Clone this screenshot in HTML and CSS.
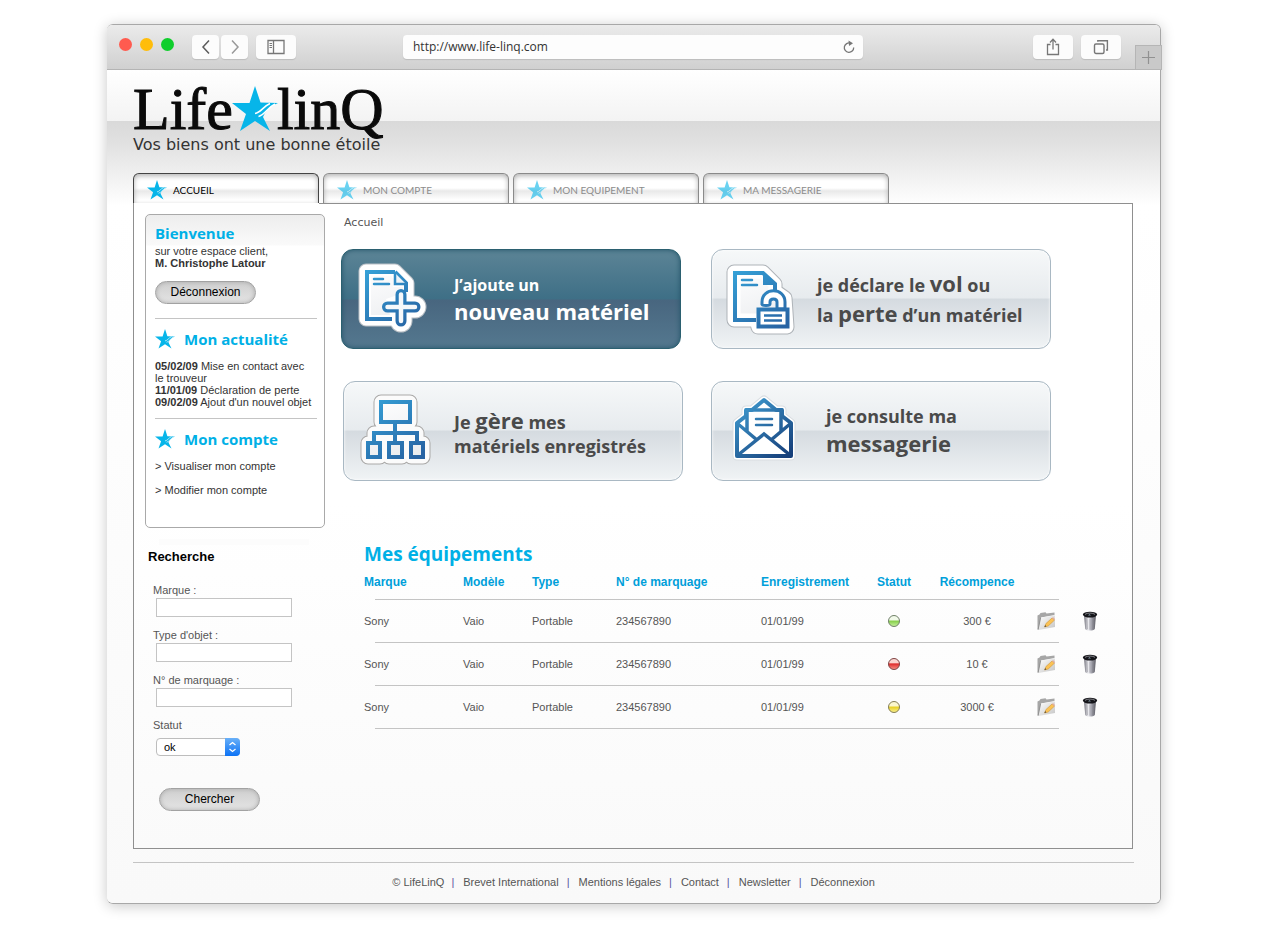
FILE: index.html
```html
<!DOCTYPE html>
<html lang="fr">
<head>
<meta charset="utf-8">
<title>LifeLinQ - Accueil</title>
<link rel="stylesheet" href="styles.css">
</head>
<body>
<svg class="sprite" aria-hidden="true">
  <defs>
    <linearGradient id="blue" gradientUnits="userSpaceOnUse" x1="10" y1="6" x2="55" y2="68">
      <stop offset="0" stop-color="#36a3d9"/><stop offset="1" stop-color="#2763a3"/>
    </linearGradient>
    <linearGradient id="navy" gradientUnits="userSpaceOnUse" x1="12" y1="8" x2="58" y2="64">
      <stop offset="0" stop-color="#3f9bd0"/><stop offset="1" stop-color="#163f7a"/>
    </linearGradient>
    <linearGradient id="paper" gradientUnits="userSpaceOnUse" x1="20" y1="5" x2="40" y2="70">
      <stop offset="0" stop-color="#ffffff"/><stop offset="1" stop-color="#e9ebee"/>
    </linearGradient>
    <linearGradient id="can" x1="0" x2="1" y1="0" y2="0">
      <stop offset="0" stop-color="#6c6c76"/><stop offset=".35" stop-color="#f0f0f4"/><stop offset=".65" stop-color="#9c9ca6"/><stop offset="1" stop-color="#5a5a62"/>
    </linearGradient>
    <linearGradient id="folderfill" x1="0" x2="1" y1="0" y2="1">
      <stop offset="0" stop-color="#ffffff"/><stop offset="1" stop-color="#c4c4c4"/>
    </linearGradient>
  </defs>
  <symbol id="star" viewBox="0 0 46 46">
    <path fill="#07b5e9" d="M23 0 28.500 16.500 46 17C41 19 36 23 33 27L31 31 38 45 23 35 8 45 14 28 0 17H17.500Z"/>
    <path fill="none" stroke="#fff" stroke-width="1.500" d="M23 27.500C29 26.500 31 20.500 38 17.500M26.500 30.500C33 29 35 22 43 18"/>
  </symbol>
  <symbol id="folder" viewBox="0 0 20 20">
    <path d="M1.500 18V4.500L3.500 3.500 4.500 2 9.500 1.200 10.500 2.500 18.500 1.500V4L5 6.500 3 18Z" fill="#a6a6a6"/>
    <path d="M2.500 19 5 6.500 19 4.500V16Z" fill="url(#folderfill)"/>
    <path d="M2 19 4.700 6.700" stroke="#8a8a8a" stroke-width=".8" fill="none"/>
    <path d="m8.500 16 1.500-3.500 6-5.500 2.300 2.300-6.100 5.700Z" fill="#fbc254" stroke="#cf9536" stroke-width=".6"/>
    <path d="m16 7 1-1 2.200 2.200-1 1.100Z" fill="#e3b0a0"/>
    <path d="m8.500 16 .700-1.800 1.200 1.100Z" fill="#333"/>
  </symbol>
  <symbol id="bin" viewBox="0 0 16 20">
    <path d="M2 4 3.200 18C5 20 11 20 12.800 18L14 4Z" fill="url(#can)"/>
    <path d="M5 7.500 5.500 18M8 8V18.500M11 7.500 10.500 18" stroke="#85858e" stroke-width=".4"/>
    <ellipse cx="8" cy="3.600" rx="7.200" ry="2.900" fill="#15151a"/>
    <path d="M3 3.400C5 1.600 11 1.600 13 3.400" stroke="#9a9aa0" fill="none" stroke-width=".8"/>
    <path d="M6 4.500 7.500 3 9 4.500" fill="#7e92a0"/>
  </symbol>
</svg>

<div class="browser">
  <header class="toolbar">
    <div class="lights"><span class="light red"></span><span class="light amber"></span><span class="light green"></span></div>
    <div class="nav">
      <button class="tool" type="button" aria-label="Précédent"><svg width="14" height="16" viewBox="0 0 14 16"><path d="M10 1.500 4 8l6 6.500" fill="none" stroke="#5b5b5b" stroke-width="1.500"/></svg></button>
      <button class="tool" type="button" aria-label="Suivant"><svg width="14" height="16" viewBox="0 0 14 16"><path d="M4 1.500 10 8l-6 6.500" fill="none" stroke="#999" stroke-width="1.500"/></svg></button>
    </div>
    <button class="tool wide" type="button" aria-label="Barre latérale"><svg width="18" height="16" viewBox="0 0 18 16"><path d="M1 1.500H17V14.500H1ZM6.500 1.500V14.500" fill="none" stroke="#777" stroke-width="1.300"/><path d="M2.500 4.500H5M2.500 6.500H5M2.500 8.500H5" stroke="#777"/></svg></button>
    <div class="address">
      <input type="text" value="http://www.life-linq.com" aria-label="Adresse">
      <button class="reload" type="button" aria-label="Recharger"><svg width="14" height="14" viewBox="0 0 14 14"><path d="M8.500 3.200A4.700 4.700 0 1 0 11.700 7.500" fill="none" stroke="#777" stroke-width="1.300"/><path d="M6.500.500 11 3.200 7 6Z" fill="#777"/></svg></button>
    </div>
    <button class="tool wide" type="button" aria-label="Partager"><svg width="14" height="18" viewBox="0 0 14 18"><path d="M4.500 6.500H1.500V16.500H12.500V6.500H9.500M7 11.500V1.500M4 4.500 7 1.300 10 4.500" fill="none" stroke="#777" stroke-width="1.300"/></svg></button>
    <button class="tool wide" type="button" aria-label="Onglets"><svg width="16" height="16" viewBox="0 0 16 16"><rect x="1.500" y="5" width="9.500" height="9.500" rx="1.500" fill="none" stroke="#777" stroke-width="1.400"/><path d="M4.800 2.800V1.700H14.400V11H13" fill="none" stroke="#777" stroke-width="1.400"/></svg></button>
    <button class="newtab" type="button" aria-label="Nouvel onglet"><svg width="13" height="13" viewBox="0 0 13 13"><path d="M6.500 0V13M0 6.500H13" stroke="#919191" stroke-width="1.200"/></svg></button>
  </header>

  <div class="page">
    <div class="brand">
      <div class="logo"><span>Life</span><svg width="46" height="46"><use href="#star"/></svg><span>linQ</span></div>
      <p class="tagline">Vos biens ont une bonne étoile</p>
    </div>

    <nav class="tabs">
      <a class="tab active" href="#"><svg width="20" height="20"><use href="#star"/></svg>ACCUEIL</a>
      <a class="tab" href="#"><svg width="20" height="20"><use href="#star"/></svg>MON COMPTE</a>
      <a class="tab" href="#"><svg width="20" height="20"><use href="#star"/></svg>MON EQUIPEMENT</a>
      <a class="tab" href="#"><svg width="20" height="20"><use href="#star"/></svg>MA MESSAGERIE</a>
    </nav>

    <div class="frame">
      <aside class="side">
        <div class="panel">
          <h2>Bienvenue</h2>
          <p>sur votre espace client,<br><b>M. Christophe Latour</b></p>
          <button class="pill" type="button">Déconnexion</button>
          <section>
            <h2><svg width="20" height="20"><use href="#star"/></svg>Mon actualité</h2>
            <p><b>05/02/09</b> Mise en contact avec le trouveur<br><b>11/01/09</b> Déclaration de perte<br><b>09/02/09</b> Ajout d'un nouvel objet</p>
          </section>
          <section>
            <h2><svg width="20" height="20"><use href="#star"/></svg>Mon compte</h2>
            <div class="links">
              <a href="#">&gt; Visualiser mon compte</a>
              <a href="#">&gt; Modifier mon compte</a>
            </div>
          </section>
        </div>
        <form class="search">
          <h3>Recherche</h3>
          <div class="field"><label for="marque">Marque :</label><input id="marque" type="text"></div>
          <div class="field"><label for="objet">Type d'objet :</label><input id="objet" type="text"></div>
          <div class="field"><label for="numero">N° de marquage :</label><input id="numero" type="text"></div>
          <div class="field status">
            <label for="statut">Statut</label>
            <div class="picker">
              <select id="statut"><option>ok</option></select>
              <svg width="15" height="18" viewBox="0 0 15 18"><path d="M4.500 7 7.500 4.500 10.500 7M4.500 11 7.500 13.500 10.500 11" fill="none" stroke="#fff" stroke-width="1.300"/></svg>
            </div>
          </div>
          <button class="pill" type="button">Chercher</button>
        </form>
      </aside>

      <main class="main">
        <p class="crumb">Accueil</p>
        <div class="cards">
          <a class="card dark" href="#">
            <svg width="78" height="78" viewBox="0 -1 78 78">
              <g stroke-linejoin="round" stroke-linecap="round" fill="none">
                <path d="M10 10H39L51 22V46L45 58H10Z" stroke="#b9bfc5" stroke-width="15"/>
                <path d="M45 32V60M31 46H59" stroke="#b9bfc5" stroke-width="23"/>
                <path d="M10 10H39L51 22V46L45 58H10Z" stroke="#fff" stroke-width="13" fill="url(#paper)"/>
                <path d="M45 32V60M31 46H59" stroke="#fff" stroke-width="21"/>
              </g>
              <path d="M15 15H36V26H47V32L30 38 34 54H15Z" fill="url(#paper)"/>
              <path d="M39 11 50 22V31M36 58H11V11H39" fill="none" stroke="url(#blue)" stroke-width="4"/>
              <path d="M39 12V23H50" fill="#eef4f8" stroke="url(#blue)" stroke-width="2.500"/>
              <path d="M18 18H27M18 23H33" stroke="url(#blue)" stroke-width="2.500" stroke-linecap="round"/>
              <path d="M45 33.500V60M31.500 46H59" fill="none" stroke="url(#blue)" stroke-width="11" stroke-linecap="round"/>
              <path d="M45 33.500V60M31.500 46H59" fill="none" stroke="#f6f8fa" stroke-width="4.500" stroke-linecap="round"/>
            </svg>
            <span class="text"><span>J’ajoute un</span><br><strong>nouveau matériel</strong></span>
          </a>
          <a class="card loss" href="#">
            <svg width="78" height="78" viewBox="0 -2 78 78">
              <path d="M10 10H39L51 22V29L61 36 63 65H34L32 58H10Z" fill="none" stroke="#aeb3b8" stroke-width="15" stroke-linejoin="round"/>
              <path d="M10 10H39L51 22V29L61 36 63 65H34L32 58H10Z" fill="url(#paper)" stroke="#fff" stroke-width="13" stroke-linejoin="round"/>
              <path d="M51 28V22L39 11H11V58H32" fill="none" stroke="url(#blue)" stroke-width="4"/>
              <path d="M39 11V23H51Z" fill="url(#blue)"/>
              <path d="M18 18H28M18 23H33" stroke="url(#blue)" stroke-width="2.500" stroke-linecap="round"/>
              <path d="M38 43V40C38 25 61 25 61 40V47H53V40C53 36 46 36 46 40V42C46 44 38 44 38 42Z" fill="#fff" stroke="url(#blue)" stroke-width="3"/>
              <rect x="34.500" y="47.500" width="29" height="17" fill="#fff" stroke="url(#blue)" stroke-width="4"/>
              <path d="M40 53.500H58M40 58.500H58" stroke="url(#blue)" stroke-width="2.500"/>
            </svg>
            <span class="text">je déclare le <strong>vol</strong> ou<br>la <strong>perte</strong> d’un matériel</span>
          </a>
          <a class="card manage" href="#">
            <svg width="78" height="78" viewBox="0 0 78 78">
              <path d="M23 10H52V30H23ZM37 31V50M16 50V41H59V50M10 51H22V65H10ZM31 51H44V65H31ZM53 51H65V65H53Z" fill="none" stroke="#aaa9a8" stroke-width="15" stroke-linejoin="round"/>
              <path d="M23 10H52V30H23ZM37 31V50M16 50V41H59V50M10 51H22V65H10ZM31 51H44V65H31ZM53 51H65V65H53Z" fill="none" stroke="#fbfbfb" stroke-width="13" stroke-linejoin="round"/>
              <path d="M16 50V41H59V50M37 31V50" fill="none" stroke="url(#blue)" stroke-width="4"/>
              <path d="M23 10H52V30H23ZM10 51H22V65H10ZM31 51H44V65H31ZM53 51H65V65H53Z" fill="url(#paper)" stroke="url(#blue)" stroke-width="4"/>
            </svg>
            <span class="text">Je <strong>gère</strong> mes<br>matériels enregistrés</span>
          </a>
          <a class="card mail" href="#">
            <svg width="78" height="78" viewBox="0 0 78 78">
              <path d="M7 64V31L16 24V18H22L34 8 46 18H52V24L61 31V64Z" fill="none" stroke="#d9dde1" stroke-width="9" stroke-linejoin="round"/>
              <path d="M7 64V31L16 24V18H22L34 8 46 18H52V24L61 31V64Z" fill="#fff" stroke="#fff" stroke-width="7" stroke-linejoin="round"/>
              <path d="M7 64V31L16 24V18H22L34 8 46 18H52V24L61 31V64Z" fill="#fff" stroke="url(#navy)" stroke-width="4" stroke-linejoin="round"/>
              <path d="M17 40V18H51V40M18 18H50M8 32 27 48M60 32 41 48M8 63 34 42 60 63" fill="none" stroke="url(#navy)" stroke-width="3.500"/>
              <path d="M26 27H42M26 33H42" stroke="url(#navy)" stroke-width="2.500" stroke-linecap="round"/>
            </svg>
            <span class="text">je consulte ma<br><strong>messagerie</strong></span>
          </a>
        </div>

        <section class="gear">
          <h1>Mes équipements</h1>
          <table>
            <colgroup><col class="c-brand"><col class="c-model"><col class="c-type"><col class="c-number"><col class="c-date"><col class="c-state"><col class="c-reward"><col class="c-edit"><col class="c-delete"></colgroup>
            <thead>
              <tr><th>Marque</th><th>Modèle</th><th>Type</th><th>N° de marquage</th><th>Enregistrement</th><th class="mid">Statut</th><th class="mid">Récompence</th><th></th><th></th></tr>
            </thead>
            <tbody>
              <tr><td>Sony</td><td>Vaio</td><td>Portable</td><td>234567890</td><td>01/01/99</td><td class="mid"><span class="led ok"></span></td><td class="mid">300 €</td><td class="mid"><button type="button" aria-label="Modifier"><svg width="20" height="20"><use href="#folder"/></svg></button></td><td class="mid"><button type="button" aria-label="Supprimer"><svg width="16" height="20"><use href="#bin"/></svg></button></td></tr>
              <tr><td>Sony</td><td>Vaio</td><td>Portable</td><td>234567890</td><td>01/01/99</td><td class="mid"><span class="led lost"></span></td><td class="mid">10 €</td><td class="mid"><button type="button" aria-label="Modifier"><svg width="20" height="20"><use href="#folder"/></svg></button></td><td class="mid"><button type="button" aria-label="Supprimer"><svg width="16" height="20"><use href="#bin"/></svg></button></td></tr>
              <tr><td>Sony</td><td>Vaio</td><td>Portable</td><td>234567890</td><td>01/01/99</td><td class="mid"><span class="led wait"></span></td><td class="mid">3000 €</td><td class="mid"><button type="button" aria-label="Modifier"><svg width="20" height="20"><use href="#folder"/></svg></button></td><td class="mid"><button type="button" aria-label="Supprimer"><svg width="16" height="20"><use href="#bin"/></svg></button></td></tr>
            </tbody>
          </table>
        </section>
      </main>
    </div>

    <footer class="footer">
      <span>© LifeLinQ</span><span class="bar first">|</span><a href="#">Brevet International</a><span class="bar">|</span><a href="#">Mentions légales</a><span class="bar">|</span><a href="#">Contact</a><span class="bar">|</span><a href="#">Newsletter</a><span class="bar">|</span><a href="#">Déconnexion</a>
    </footer>
  </div>
</div>
</body>
</html>
```
FILE: styles.css
```css
* { box-sizing: border-box; }

body {
  margin: 0;
  padding: 24px 119px 24px 107px;
  background: #fff;
  color: #333;
  font: 11px/12px "Liberation Sans", Arial, sans-serif;
}

h1, h2, h3, p { margin: 0; }
a { color: inherit; text-decoration: none; }
button, input, select { font-family: inherit; margin: 0; }
svg { display: block; flex: none; }
.sprite { position: absolute; width: 0; height: 0; }

/* Browser window */
.browser {
  position: relative;
  border: 1px solid #a8a8a8;
  border-left: 0;
  border-radius: 6px;
  box-shadow: 0 2px 14px rgba(0, 0, 0, .22);
}
.toolbar {
  display: flex;
  align-items: center;
  height: 45px;
  padding: 0 39px 1px 12px;
  border-bottom: 1px solid #b4b4b4;
  border-radius: 5px 5px 0 0;
  background: linear-gradient(#ebebeb, #d0d0d0);
}
.lights { display: flex; gap: 8px; margin-right: 18px; padding-bottom: 4px; }
.light { width: 13px; height: 13px; border-radius: 50%; }
.red { background: #ff5b4f; }
.amber { background: #ffbd0b; }
.green { background: #0fce2c; }
.nav { display: flex; gap: 2px; margin-right: 8px; }
.tool {
  display: flex;
  align-items: center;
  justify-content: center;
  width: 27px;
  height: 24px;
  padding: 0;
  border: 0;
  border-radius: 4px;
  background: #fcfcfc;
  box-shadow: 0 1px 1px rgba(0, 0, 0, .12);
}
.wide { width: 40px; }
.wide + .wide { margin-left: 8px; }
.address {
  display: flex;
  flex: 1;
  height: 24px;
  margin: 0 170px 0 107px;
  padding: 0 7px 0 10px;
  border-radius: 4px;
  background: #fdfdfd;
  box-shadow: 0 1px 1px rgba(0, 0, 0, .12);
  align-items: center;
}
.address input {
  flex: 1;
  min-width: 0;
  padding: 0;
  border: 0;
  background: none;
  color: #333;
  font: 12px/16px "Open Sans", sans-serif;
}
.reload { padding: 0; border: 0; background: none; }
.newtab {
  position: absolute;
  top: 20px;
  right: -2px;
  display: flex;
  align-items: center;
  justify-content: center;
  width: 27px;
  height: 25px;
  padding: 0;
  border: 1px solid #b5b5b5;
  background: #c9c9c9;
}

/* Page */
.page {
  padding: 13px 26px 15px 26px;
  border-radius: 0 0 6px 6px;
  background:
    linear-gradient(#fff, #f3f3f3) 0 0 / 100% 51px no-repeat,
    linear-gradient(#d9d9d9, #e2e2e2 25px, #fff 84px) 0 51px / 100% 84px no-repeat,
    linear-gradient(#fff 135px, #f9f9f9);
}
.logo {
  display: flex;
  align-items: center;
  height: 52px;
  color: #0a0a0a;
  font: 60px/52px "Liberation Serif", serif;
  -webkit-text-stroke: 1px #0a0a0a;
}
.logo svg { margin: 0 -1px; }
.tagline { color: #333; font: 16px/20px "DejaVu Sans", Verdana, sans-serif; }

.tabs { display: flex; gap: 4px; margin-top: 18px; }
.tab {
  display: flex;
  align-items: center;
  gap: 6px;
  width: 186px;
  height: 30px;
  padding: 3px 0 0 13px;
  border: 1px solid #8a8a8a;
  border-width: 1px 1px 0;
  border-radius: 6px 6px 0 0;
  background: linear-gradient(#fff 14px, #e9e9e9 17px, #fff 26px);
  box-shadow: inset 0 2px 5px #b5b5b5;
  color: #8c8c8c;
  font: 10px/12px Lato, "Trebuchet MS", sans-serif;
}
.tab svg { opacity: .6; }
.tab.active { border-color: #444; color: #000; }
.tab.active svg { opacity: 1; }

.frame {
  display: flex;
  margin-right: 1px;
  padding: 11px 20px 37px 11px;
  border: 1px solid #8f8f8f;
  border-top: 0;
  background:
    linear-gradient(#8f8f8f, #8f8f8f) 185px 0 / 100% 1px no-repeat,
    linear-gradient(#fff, #fff 300px, #fafafa);
}

/* Left column */
.side { flex: none; width: 180px; }
.panel {
  padding: 6px 7px 31px 9px;
  border: 1px solid #a9a9a9;
  border-radius: 5px;
  background: linear-gradient(#ededed, #fafafa 30px, #fff 31px);
}
.panel h2 {
  display: flex;
  align-items: center;
  gap: 9px;
  color: #00b0e6;
  font: bold 15px/24px "Open Sans", "Trebuchet MS", sans-serif;
}
.panel h2 + p, .links { margin-top: 9px; }
.panel p { padding-right: 5px; }
.panel > h2 + p { margin-top: 0; }
.panel section { margin-top: 10px; padding-top: 8px; border-top: 1px solid #c4c4c4; }
.panel .pill + section { margin-top: 14px; }
.links { display: flex; flex-direction: column; gap: 12px; }
.pill {
  display: block;
  width: 101px;
  height: 23px;
  padding: 0 0 2px;
  border: 1px solid #a2a2a2;
  border-radius: 12px;
  background: linear-gradient(#cfcfcf, #e4e4e4);
  box-shadow: inset 0 0 4px #aaa;
  color: #000;
  font-size: 12px;
}
.panel .pill { margin-top: 12px; }

.search { padding: 11px 0 0 3px; color: #555; }
.search::before {
  content: "";
  display: block;
  width: 150px;
  height: 6px;
  margin: 0 0 3px 11px;
  background: #fcfcfc;
}
.search h3 { margin-bottom: 18px; color: #000; font: bold 13px/18px "Liberation Sans", sans-serif; }
.field { display: flex; flex-direction: column; gap: 2px; margin: 0 0 12px 5px; }
.field input {
  width: 136px;
  height: 19px;
  margin-left: 3px;
  padding: 0 4px;
  border: 1px solid #c4c4c4;
  background: #fff;
}
.status { gap: 7px; margin-bottom: 32px; }
.picker { position: relative; width: 84px; margin-left: 3px; }
.picker select {
  display: block;
  width: 100%;
  height: 18px;
  padding: 0 20px 0 7px;
  border: 1px solid #bdbdbd;
  border-radius: 4px;
  appearance: none;
  background: #fff;
  color: #000;
  font-size: 11px;
}
.picker svg {
  position: absolute;
  top: 0;
  right: 0;
  border-radius: 0 4px 4px 0;
  background: linear-gradient(#69b0f8, #0c72f5);
  pointer-events: none;
}
.search .pill { margin-left: 11px; }

/* Main column */
.main { flex: 1; min-width: 0; padding-left: 16px; }
.crumb { padding-left: 3px; color: #555; font: 11px/18px "DejaVu Sans", Verdana, sans-serif; }
.cards { display: grid; grid-template-columns: 342px 340px; gap: 32px 28px; margin-top: 17px; }
.card {
  display: flex;
  align-items: center;
  gap: 20px;
  width: 340px;
  height: 100px;
  padding-left: 14px;
  border: 1px solid #a9b8c3;
  border-radius: 12px;
  background: linear-gradient(#f6f8f9, #e7ebee 49%, #d5dbe0 50%, #f0f3f5);
  box-shadow: inset 0 0 3px #fff;
  color: #4a4a4a;
  font: bold 18px/28px "Open Sans", "Trebuchet MS", sans-serif;
}
.card strong { font-size: 22px; font-weight: bold; }
.dark {
  border-color: #2b6070;
  background: linear-gradient(#5c8496, #3e6f86 50%, #48667f 51%, #54788f);
  box-shadow: inset 0 0 5px #24566a;
  color: #fff;
  font-size: 16px;
  line-height: 26px;
}
.loss { padding-left: 12px; gap: 15px; }
.manage { justify-self: end; gap: 18px; line-height: 24px; }
.manage .text { padding-top: 4px; }
.mail { padding-left: 18px; gap: 18px; line-height: 27px; }

.gear { padding: 59px 0 0 23px; }
.gear h1 { color: #00b0e6; font: bold 19px/28px "Open Sans", "Trebuchet MS", sans-serif; }
table { width: 747px; border-collapse: collapse; table-layout: fixed; }
tr {
  background: linear-gradient(#c4c4c4, #c4c4c4) 11px 100% / 684px 1px no-repeat;
}
th, td { height: 43px; padding: 0 0 2px; text-align: left; color: #555; }
th {
  height: 32px;
  padding-bottom: 4px;
  color: #009fda;
  font-size: 12px;
}
.mid { text-align: center; }
td svg, .led { margin: 0 auto; }
td button { display: block; margin: 0 auto; padding: 0; border: 0; background: none; }
.c-brand { width: 99px; }
.c-model { width: 69px; }
.c-type { width: 84px; }
.c-number { width: 145px; }
.c-date { width: 97px; }
.c-state { width: 72px; }
.c-reward { width: 94px; }
.c-edit { width: 44px; }
.c-delete { width: 43px; }
.led {
  display: block;
  width: 12px;
  height: 12px;
  border: 1px solid #71806a;
  border-radius: 50%;
}
.ok { background: linear-gradient(#f2faea 40%, #86cf4a 50%, #c3ef9a); }
.lost { border-color: #7e4545; background: linear-gradient(#fbd5d0 35%, #e02f2f 50%, #f58a80); }
.wait { border-color: #857e55; background: linear-gradient(#fbf7cf 40%, #e8d023 50%, #f8ee8a); }

/* Footer */
.footer {
  display: flex;
  justify-content: center;
  margin-top: 13px;
  padding-top: 13px;
  border-top: 1px solid #c4c4c4;
  color: #555;
}
.bar { margin: 0 9px 0 8px; color: #5b55a0; }
.bar.first { margin-left: 7px; }
```
